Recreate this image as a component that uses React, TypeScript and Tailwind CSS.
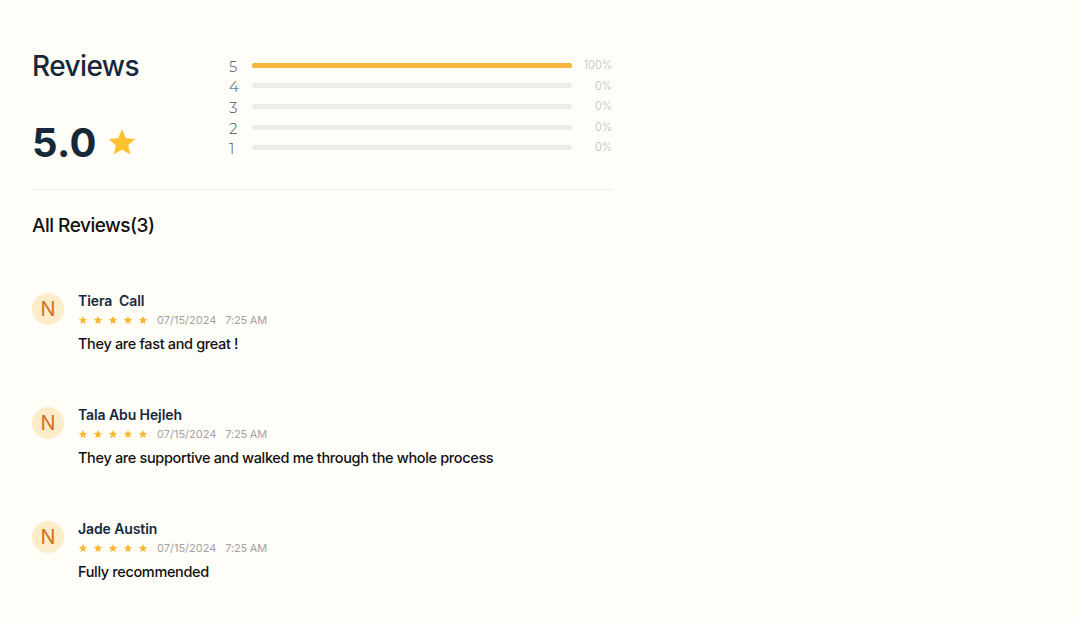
import React from "react";

const reviews = [
  { name: "Tiera  Call", text: "They are fast and great !" },
  { name: "Tala Abu Hejleh", text: "They are supportive and walked me through the whole process" },
  { name: "Jade Austin", text: "Fully recommended" },
];

const bars = [
  { label: "5", pct: 100 },
  { label: "4", pct: 0 },
  { label: "3", pct: 0 },
  { label: "2", pct: 0 },
  { label: "1", pct: 0 },
];

function Star({ className }: { className?: string }) {
  return (
    <svg viewBox="0 0 24 24" className={className} fill="currentColor">
      <path d="M12 2.5l2.9 6.6 7.1.6-5.4 4.7 1.6 7-6.2-3.7-6.2 3.7 1.6-7L2 9.7l7.1-.6z" />
    </svg>
  );
}

export default function App() {
  return (
    <div
      className="w-[1080px] h-[622px] bg-[#fffdf8] overflow-hidden"
      style={{ fontFamily: "Inter, 'Open Sans', sans-serif" }}
    >
      <div className="w-[580px] ml-[32px] pt-[46px]">
        <div className="flex border-b border-[#efefeb] pb-[22px]">
          <div className="w-[197px]">
            <div className="text-[28px] leading-[40px] text-[#15293a] font-medium tracking-[-0.6px]">Reviews</div>
            <div className="flex items-center mt-[33px]">
              <span className="text-[40px] leading-[48px] font-bold text-[#15293a] tracking-[0.3px]">5.0</span>
              <Star className="w-[32px] h-[32px] text-[#fdc12f] ml-[9px] mb-[2px]" />
            </div>
          </div>
          <div className="flex-1 flex flex-col pt-[9px]">
            {bars.map((b) => (
              <div key={b.label} className="flex items-center h-[20.6px]">
                <span className="w-[20px] text-[15px] leading-[20px] pt-[3px] text-[#3d4d5c] font-light" style={{ fontFamily: "Montserrat, 'Open Sans', sans-serif" }}>
                  {b.label}
                </span>
                <div className="w-[320px] h-[5px] rounded-full bg-[#ebebea] ml-[3px]">
                  <div className="h-full rounded-full bg-[#f8b43c]" style={{ width: `${b.pct}%` }} />
                </div>
                <span className="flex-1 text-right text-[11px] text-[#bdbdbd] font-light">{b.pct}%</span>
              </div>
            ))}
          </div>
        </div>
        <div className="mt-[23px] text-[19px] leading-[26px] text-[#111] font-medium tracking-[-0.5px]">All Reviews(3)</div>
        <div className="mt-[52px] flex flex-col gap-[51.5px]">
          {reviews.map((r) => (
            <div key={r.name} className="flex">
              <div className="w-[32px] h-[32px] rounded-full bg-[#fdecc9] flex items-center justify-center text-[20px] text-[#d8711b] mt-[2px]">
                N
              </div>
              <div className="ml-[14px]">
                <div className="text-[14px] leading-[20px] font-semibold text-[#15293a] tracking-[-0.1px] whitespace-pre">{r.name}</div>
                <div className="flex items-center mt-[1px]">
                  <div className="flex gap-[5px]">
                    {[0, 1, 2, 3, 4].map((i) => (
                      <Star key={i} className="w-[10px] h-[10px] text-[#f9b932]" />
                    ))}
                  </div>
                  <span className="ml-[9px] text-[11px] text-[#a3a3a3]">07/15/2024</span>
                  <span className="ml-[9px] text-[11px] text-[#a3a3a3] tracking-[-0.2px]">7:25 AM</span>
                </div>
                <div className="mt-[5px] text-[14.5px] leading-[20px] text-[#111] font-medium tracking-[-0.35px]">{r.text}</div>
              </div>
            </div>
          ))}
        </div>
      </div>
    </div>
  );
}
